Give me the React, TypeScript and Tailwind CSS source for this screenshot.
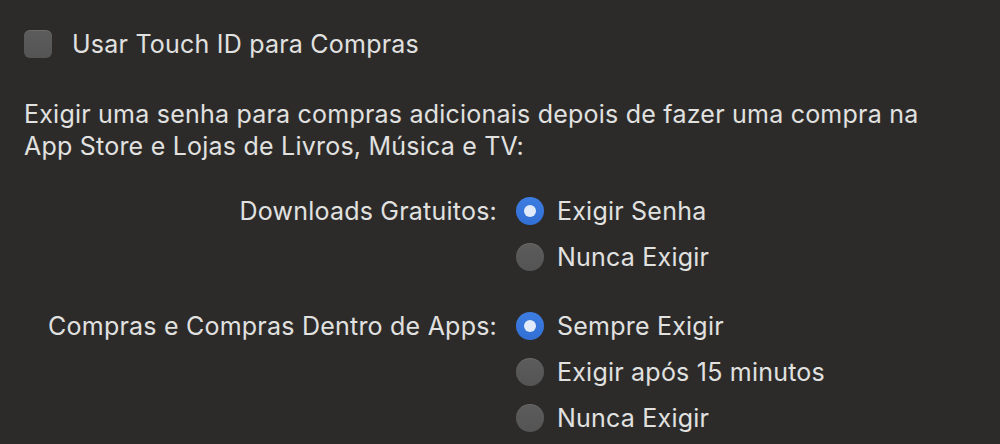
import React from "react";

function Radio({ checked }: { checked?: boolean }) {
  if (checked) {
    return (
      <div className="w-[28px] h-[28px] rounded-full bg-gradient-to-b from-[#3d7ce0] to-[#3270d6] flex items-center justify-center shrink-0">
        <div className="w-[12px] h-[12px] rounded-full bg-[#e2ebfb]" />
      </div>
    );
  }
  return (
    <div className="w-[28px] h-[28px] rounded-full bg-gradient-to-b from-[#5c5c5c] to-[#545454] shadow-[inset_0_1px_0_rgba(255,255,255,0.08)] shrink-0" />
  );
}

function Option({ checked, label }: { checked?: boolean; label: string }) {
  return (
    <div className="flex items-center gap-[13px] h-[46px]">
      <Radio checked={checked} />
      <span>{label}</span>
    </div>
  );
}

export default function App() {
  return (
    <div
      className="w-[1000px] h-[444px] bg-[#2c2b2a] text-[#e1e1e0] overflow-hidden text-[25px] leading-[32px] tracking-[0.22px]"
      style={{ fontFamily: "Inter, 'Noto Sans', sans-serif" }}
    >
      <div className="flex items-center gap-[20px] pl-[24px] pt-[28px]">
        <div className="w-[28px] h-[28px] rounded-[6px] bg-gradient-to-b from-[#5c5c5c] to-[#545454] shadow-[inset_0_1px_0_rgba(255,255,255,0.1)]" />
        <span>Usar Touch ID para Compras</span>
      </div>
      <div className="pl-[24px] pt-[38px]">
        Exigir uma senha para compras adicionais depois de fazer uma compra na
        <br />
        App Store e Lojas de Livros, Música e TV:
      </div>
      <div className="grid grid-cols-[497px_1fr] gap-x-[19px] mt-[26px]">
        <div className="text-right h-[46px] flex items-center justify-end">Downloads Gratuitos:</div>
        <div>
          <Option checked label="Exigir Senha" />
          <Option label="Nunca Exigir" />
        </div>
        <div className="text-right h-[46px] flex items-center justify-end mt-[23px]">Compras e Compras Dentro de Apps:</div>
        <div className="mt-[23px]">
          <Option checked label="Sempre Exigir" />
          <Option label="Exigir após 15 minutos" />
          <Option label="Nunca Exigir" />
        </div>
      </div>
    </div>
  );
}
